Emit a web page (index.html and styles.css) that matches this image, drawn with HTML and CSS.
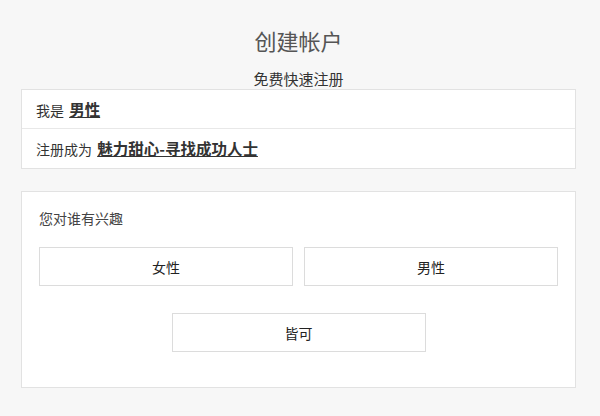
FILE: index.html
```html
<!DOCTYPE html>
<html lang="zh-CN">
<head>
<meta charset="utf-8">
<link rel="stylesheet" href="styles.css">
</head>
<body>
<div class="page">
  <div class="header">
    <h1 class="title">创建帐户</h1>
    <p class="subtitle">免费快速注册</p>
  </div>
  <div class="card summary">
    <div class="row">我是 <a class="link" href="#">男性</a></div>
    <div class="row">注册成为 <a class="link" href="#">魅力甜心-寻找成功人士</a></div>
  </div>
  <div class="card choice">
    <div class="label">您对谁有兴趣</div>
    <div class="options">
      <button class="btn">女性</button>
      <button class="btn">男性</button>
    </div>
    <div class="single">
      <button class="btn">皆可</button>
    </div>
  </div>
</div>
</body>
</html>
```
FILE: styles.css
```css
html, body {
  margin: 0;
  padding: 0;
  background: #f7f7f7;
}
body {
  font-family: "Noto Sans CJK SC", "Noto Sans", sans-serif;
  color: #333;
}
.page {
  width: 555px;
  margin-left: 21px;
}
.header {
  text-align: center;
}
.title {
  margin: 0;
  padding-top: 25px;
  font-size: 22px;
  line-height: 30px;
  font-weight: normal;
  color: #555;
}
.subtitle {
  margin: 14px 0 0;
  font-size: 15px;
  line-height: 20px;
  color: #333;
}
.card {
  background: #fff;
  border: 1px solid #e2e2e2;
}
.row {
  height: 38px;
  line-height: 38px;
  padding-left: 14px;
  font-size: 14px;
  border-top: 1px solid #e8e8e8;
}
.row:first-child {
  border-top: none;
}
.row:last-child {
  height: 39px;
}
.link {
  margin-left: 2px;
  color: #333;
  font-size: 15.5px;
  font-weight: bold;
  text-decoration: underline;
}
.choice {
  margin-top: 22px;
  padding: 16px 17px 35px;
}
.label {
  font-size: 14px;
  line-height: 20px;
  color: #444;
}
.options {
  display: grid;
  grid-template-columns: 1fr 1fr;
  gap: 11px;
  margin-top: 19px;
}
.single {
  display: flex;
  justify-content: center;
  margin-top: 27px;
}
.btn {
  height: 39px;
  background: #fff;
  border: 1px solid #dcdcdc;
  font-family: inherit;
  font-size: 14px;
  color: #222;
  padding: 0;
}
.single .btn {
  width: 254px;
}
```
